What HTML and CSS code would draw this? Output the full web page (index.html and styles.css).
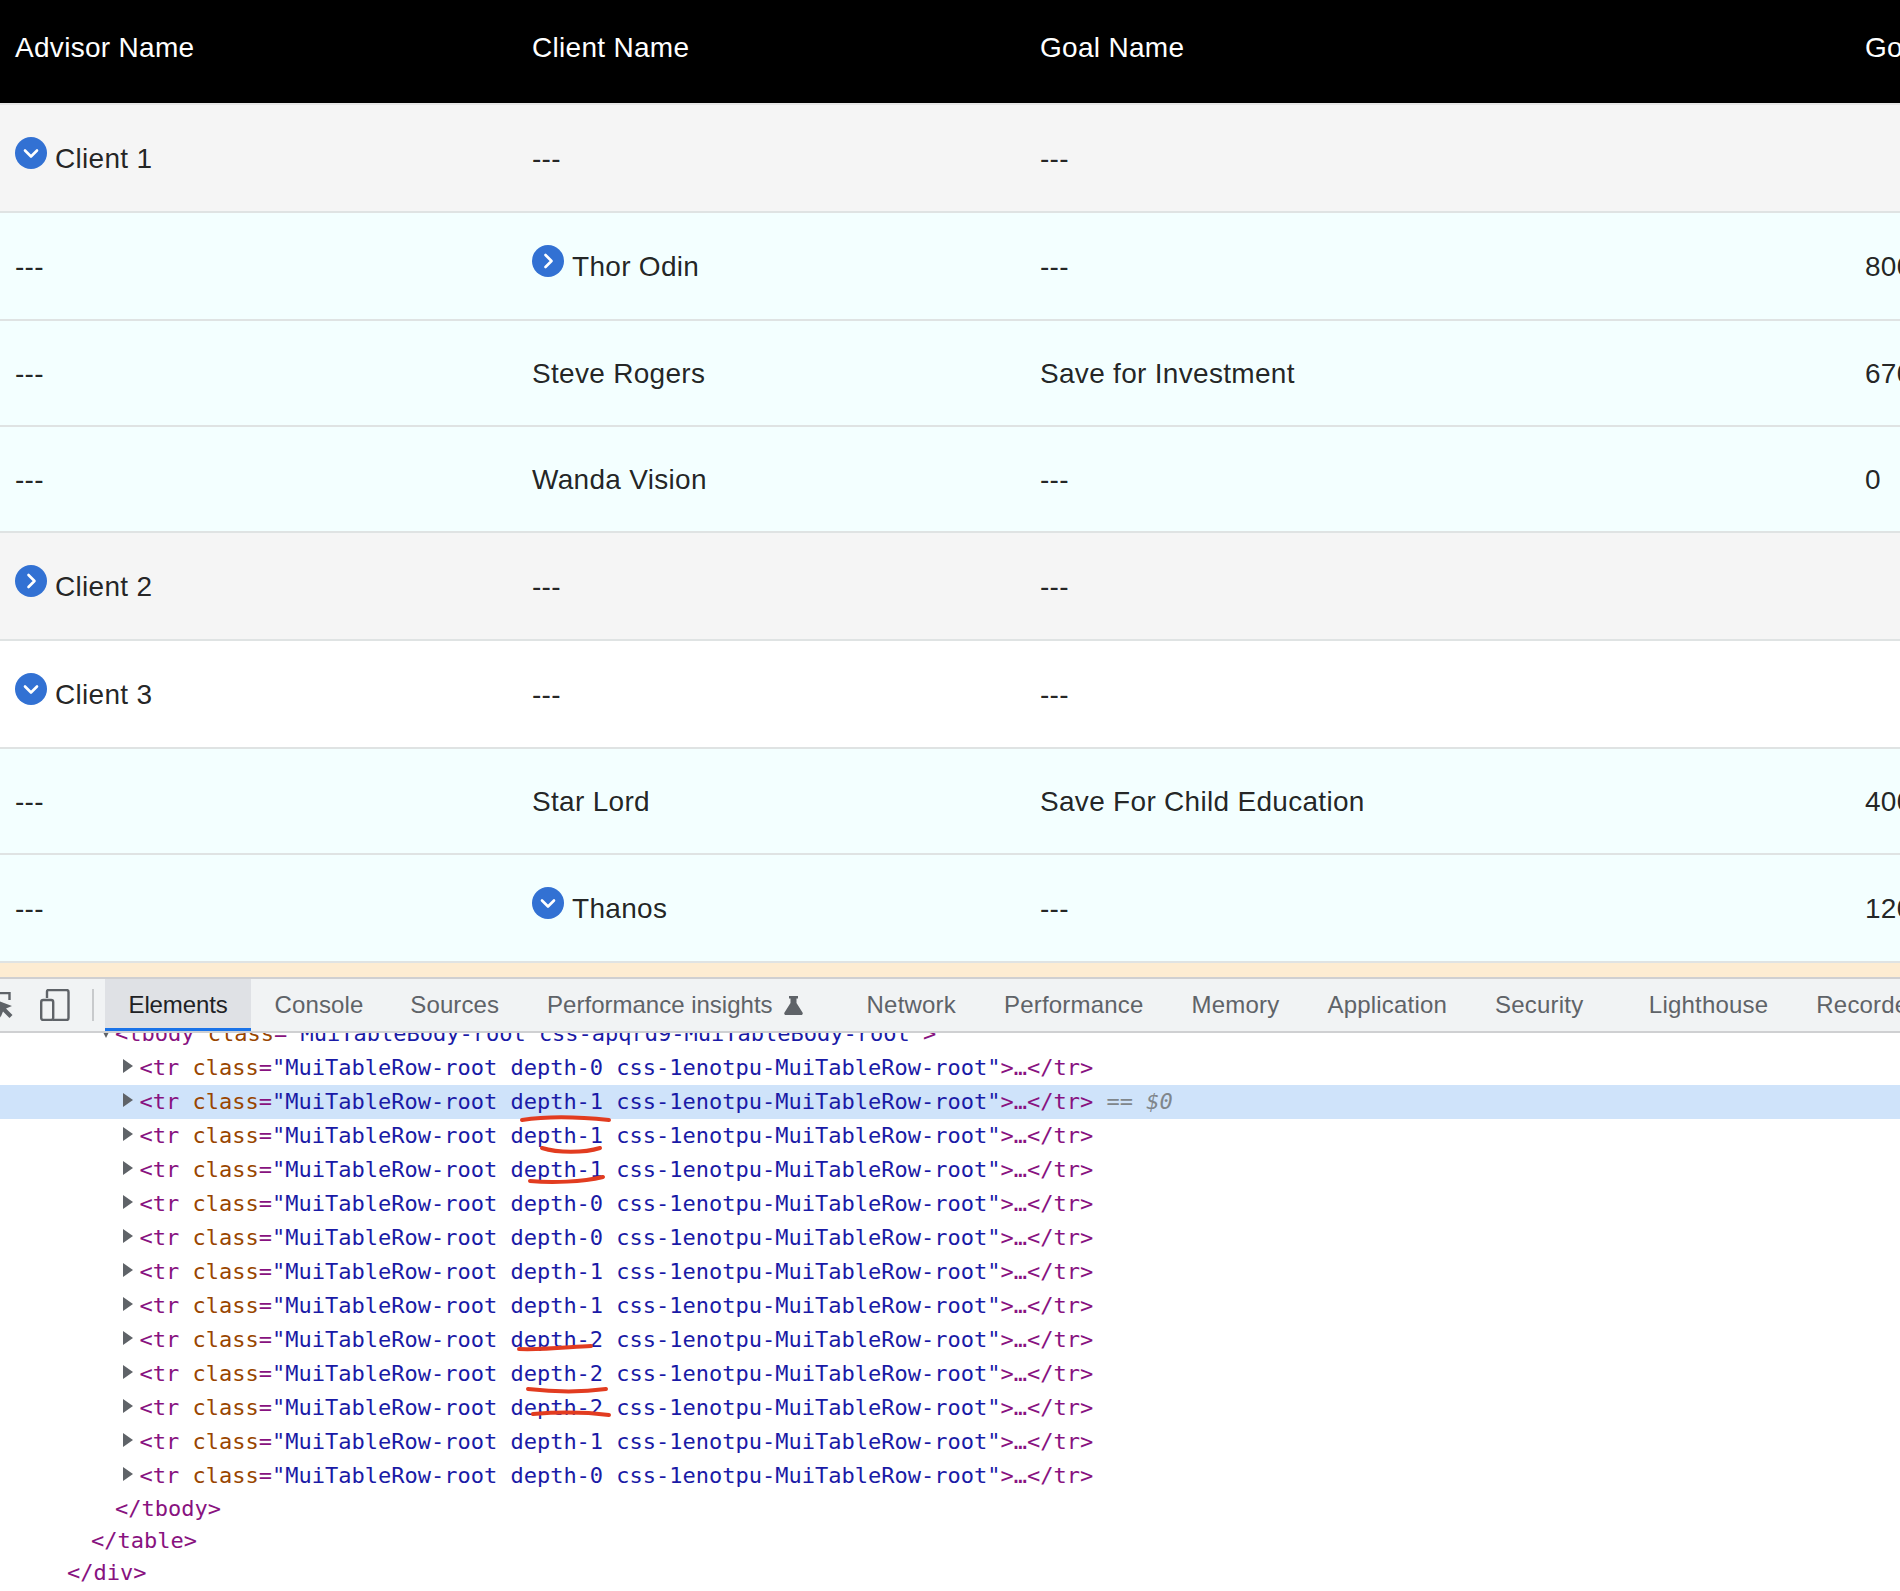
FILE: index.html
```html
<!DOCTYPE html>
<html lang="en">
<head>
<meta charset="utf-8">
<title>Advisor table</title>
<link rel="stylesheet" href="styles.css">
</head>
<body>
<div class="page">
  <section class="table-view">
    <table class="data-table">
      <colgroup><col class="col-a"><col class="col-b"><col class="col-c"><col class="col-d"></colgroup>
      <thead>
        <tr><th>Advisor Name</th><th>Client Name</th><th>Goal Name</th><th>Goal Amount</th></tr>
      </thead>
      <tbody>
        <tr class="row-tall bg-gray">
          <td><svg class="toggle" viewBox="0 0 32 32"><circle cx="16" cy="16" r="16"/><path d="M10 13.500l6 6 6-6"/></svg>Client 1</td><td>---</td><td>---</td><td></td>
        </tr>
        <tr class="row-tall bg-azure">
          <td>---</td><td><svg class="toggle" viewBox="0 0 32 32"><circle cx="16" cy="16" r="16"/><path d="M13.500 10l6 6-6 6"/></svg>Thor Odin</td><td>---</td><td>8000</td>
        </tr>
        <tr class="row bg-azure"><td>---</td><td>Steve Rogers</td><td>Save for Investment</td><td>6700</td></tr>
        <tr class="row bg-azure"><td>---</td><td>Wanda Vision</td><td>---</td><td>0</td></tr>
        <tr class="row-tall bg-gray">
          <td><svg class="toggle" viewBox="0 0 32 32"><circle cx="16" cy="16" r="16"/><path d="M13.500 10l6 6-6 6"/></svg>Client 2</td><td>---</td><td>---</td><td></td>
        </tr>
        <tr class="row-tall bg-white">
          <td><svg class="toggle" viewBox="0 0 32 32"><circle cx="16" cy="16" r="16"/><path d="M10 13.500l6 6 6-6"/></svg>Client 3</td><td>---</td><td>---</td><td></td>
        </tr>
        <tr class="row bg-azure"><td>---</td><td>Star Lord</td><td>Save For Child Education</td><td>4000</td></tr>
        <tr class="row-tall bg-azure">
          <td>---</td><td><svg class="toggle" viewBox="0 0 32 32"><circle cx="16" cy="16" r="16"/><path d="M10 13.500l6 6 6-6"/></svg>Thanos</td><td>---</td><td>1200</td>
        </tr>
      </tbody>
    </table>
  </section>

  <div class="info-bar"></div>

  <section class="devtools">
    <nav class="dt-toolbar">
      <div class="dt-tools">
        <svg class="tool-cursor" viewBox="0 0 14 28"><path class="tool-line" d="M0 1h9.500v7"/><path class="tool-fill" d="M-4 8l16 6-6 2.500 6.500 6.500-3 3-6.500-6.500-2.500 6z"/></svg>
        <svg class="tool-device" viewBox="0 0 30 32"><path class="tool-line" d="M7 9V2.500a1.500 1.500 0 0 1 1.500-1.500h18a2 2 0 0 1 2 2v26a2 2 0 0 1-2 2H13"/><rect class="tool-line" x="1.200" y="11" width="12" height="20" rx="2"/></svg>
        <span class="tool-sep"></span>
      </div>
      <span class="tab tab-active">Elements</span>
      <span class="tab">Console</span>
      <span class="tab tab-sources">Sources</span>
      <span class="tab tab-flask">Performance insights<svg class="flask" viewBox="0 0 19 19"><path d="M5 0h9v2.500h-1.500v4.500l6 9.500c.7 1.200 0 2.500-1.300 2.500H1.800C.5 19-.2 17.700.5 16.500l6-9.500V2.500H5z"/></svg></span>
      <span class="tab tab-wide">Network</span>
      <span class="tab tab-wide">Performance</span>
      <span class="tab tab-wide">Memory</span>
      <span class="tab tab-wide">Application</span>
      <span class="tab tab-wide tab-spaced">Security</span>
      <span class="tab tab-wide">Lighthouse</span>
      <span class="tab tab-wide">Recorder</span>
    </nav>

    <div class="dom-tree">
      <div class="line line-open"><span class="arrow-open"></span><span class="tag">&lt;tbody</span> <span class="attr">class</span><span class="tag">=</span><span class="val">"MuiTableBody-root css-apqrd9-MuiTableBody-root"</span><span class="tag">&gt;</span></div>
      <div class="line line-row"><span class="arrow"></span><span class="tag">&lt;tr</span> <span class="attr">class</span><span class="tag">=</span><span class="val">"MuiTableRow-root depth-0 css-1enotpu-MuiTableRow-root"</span><span class="tag">&gt;…&lt;/tr&gt;</span></div>
      <div class="line line-row line-selected"><span class="arrow"></span><span class="tag">&lt;tr</span> <span class="attr">class</span><span class="tag">=</span><span class="val">"MuiTableRow-root depth-1 css-1enotpu-MuiTableRow-root"</span><span class="tag">&gt;…&lt;/tr&gt;</span><span class="ref"> == <i>$0</i></span></div>
      <div class="line line-row"><span class="arrow"></span><span class="tag">&lt;tr</span> <span class="attr">class</span><span class="tag">=</span><span class="val">"MuiTableRow-root depth-1 css-1enotpu-MuiTableRow-root"</span><span class="tag">&gt;…&lt;/tr&gt;</span></div>
      <div class="line line-row"><span class="arrow"></span><span class="tag">&lt;tr</span> <span class="attr">class</span><span class="tag">=</span><span class="val">"MuiTableRow-root depth-1 css-1enotpu-MuiTableRow-root"</span><span class="tag">&gt;…&lt;/tr&gt;</span></div>
      <div class="line line-row"><span class="arrow"></span><span class="tag">&lt;tr</span> <span class="attr">class</span><span class="tag">=</span><span class="val">"MuiTableRow-root depth-0 css-1enotpu-MuiTableRow-root"</span><span class="tag">&gt;…&lt;/tr&gt;</span></div>
      <div class="line line-row"><span class="arrow"></span><span class="tag">&lt;tr</span> <span class="attr">class</span><span class="tag">=</span><span class="val">"MuiTableRow-root depth-0 css-1enotpu-MuiTableRow-root"</span><span class="tag">&gt;…&lt;/tr&gt;</span></div>
      <div class="line line-row"><span class="arrow"></span><span class="tag">&lt;tr</span> <span class="attr">class</span><span class="tag">=</span><span class="val">"MuiTableRow-root depth-1 css-1enotpu-MuiTableRow-root"</span><span class="tag">&gt;…&lt;/tr&gt;</span></div>
      <div class="line line-row"><span class="arrow"></span><span class="tag">&lt;tr</span> <span class="attr">class</span><span class="tag">=</span><span class="val">"MuiTableRow-root depth-1 css-1enotpu-MuiTableRow-root"</span><span class="tag">&gt;…&lt;/tr&gt;</span></div>
      <div class="line line-row"><span class="arrow"></span><span class="tag">&lt;tr</span> <span class="attr">class</span><span class="tag">=</span><span class="val">"MuiTableRow-root depth-2 css-1enotpu-MuiTableRow-root"</span><span class="tag">&gt;…&lt;/tr&gt;</span></div>
      <div class="line line-row"><span class="arrow"></span><span class="tag">&lt;tr</span> <span class="attr">class</span><span class="tag">=</span><span class="val">"MuiTableRow-root depth-2 css-1enotpu-MuiTableRow-root"</span><span class="tag">&gt;…&lt;/tr&gt;</span></div>
      <div class="line line-row"><span class="arrow"></span><span class="tag">&lt;tr</span> <span class="attr">class</span><span class="tag">=</span><span class="val">"MuiTableRow-root depth-2 css-1enotpu-MuiTableRow-root"</span><span class="tag">&gt;…&lt;/tr&gt;</span></div>
      <div class="line line-row"><span class="arrow"></span><span class="tag">&lt;tr</span> <span class="attr">class</span><span class="tag">=</span><span class="val">"MuiTableRow-root depth-1 css-1enotpu-MuiTableRow-root"</span><span class="tag">&gt;…&lt;/tr&gt;</span></div>
      <div class="line line-row"><span class="arrow"></span><span class="tag">&lt;tr</span> <span class="attr">class</span><span class="tag">=</span><span class="val">"MuiTableRow-root depth-0 css-1enotpu-MuiTableRow-root"</span><span class="tag">&gt;…&lt;/tr&gt;</span></div>
      <div class="line line-tbody"><span class="tag">&lt;/tbody&gt;</span></div>
      <div class="line line-table"><span class="tag">&lt;/table&gt;</span></div>
      <div class="line line-div"><span class="tag">&lt;/div&gt;</span></div>
    </div>
  </section>

  <svg class="annotations" viewBox="0 0 1900 1591">
    <path d="M522 1120c26-4 58-3 87 0"/>
    <path d="M542 1148c16 5 42 5 58 0"/>
    <path d="M530 1181c22 2 52 1 73-4"/>
    <path d="M519 1349c24 1 50-2 72-3"/>
    <path d="M528 1389c26 3 56 3 78 0"/>
    <path d="M533 1414c24-2 52-2 76 1"/>
  </svg>
</div>
</body>
</html>
```
FILE: styles.css
```css
* { box-sizing: border-box; }

html, body {
  margin: 0;
  padding: 0;
  height: 100%;
  overflow: hidden;
  background: #fff;
}

.page {
  position: relative;
  display: flex;
  flex-direction: column;
  width: 1900px;
  height: 1591px;
  overflow: hidden;
}

/* Data table */
.table-view {
  flex: 0 0 963px;
  overflow: hidden;
}

.data-table {
  table-layout: fixed;
  width: 2250px;
  border-collapse: separate;
  border-spacing: 0;
  font-family: "Liberation Sans", Arial, sans-serif;
  font-size: 28px;
  letter-spacing: 0.3px;
  color: rgba(0, 0, 0, 0.87);
}

.col-a { width: 517px; }
.col-b { width: 508px; }
.col-c { width: 825px; }
.col-d { width: 400px; }

.data-table th {
  height: 105px;
  padding: 0 15px 7px;
  background: #000;
  border-bottom: 2px solid #e6e6e6;
  color: #fff;
  font-weight: 400;
  text-align: left;
}

.data-table td {
  padding: 0 15px;
  border-bottom: 2px solid #dfe3e3;
  white-space: nowrap;
}

.row td {
  height: 106px;
  padding-top: 1px;
}

.row-tall td {
  height: 108px;
  padding-top: 2px;
}

.bg-gray td { background: #f5f5f5; }
.bg-azure td { background: #f3ffff; }
.bg-white td { background: #fff; }

.toggle {
  display: inline-block;
  width: 32px;
  height: 32px;
  margin-top: -8px;
  margin-right: 8px;
  vertical-align: -1px;
}

.toggle circle { fill: #3271d3; }

.toggle path {
  fill: none;
  stroke: #fff;
  stroke-width: 2.6;
  stroke-linecap: round;
  stroke-linejoin: round;
}

/* Notice strip */
.info-bar {
  flex: 0 0 14px;
  background: #fdecd2;
}

/* DevTools */
.devtools {
  flex: 1;
  display: flex;
  flex-direction: column;
  min-height: 0;
}

.dt-toolbar {
  flex: 0 0 56px;
  display: flex;
  align-items: stretch;
  overflow: hidden;
  background: #f1f3f4;
  border-top: 2px solid #cfcfd1;
  border-bottom: 2px solid #cfd0d2;
  font-family: "Liberation Sans", Arial, sans-serif;
  font-size: 24px;
  letter-spacing: 0.1px;
  white-space: nowrap;
}

.dt-tools {
  flex: 0 0 105px;
  display: flex;
  align-items: center;
}

.tool-cursor {
  flex: none;
  width: 14px;
  height: 28px;
  margin-top: 2px;
}

.tool-device {
  flex: none;
  width: 30px;
  height: 32px;
  margin-left: 26px;
}

.tool-line {
  fill: none;
  stroke: #5f6368;
  stroke-width: 2.4;
}

.tool-fill { fill: #5f6368; }

.tool-sep {
  flex: none;
  width: 2px;
  height: 32px;
  margin-left: 22px;
  background: #c8cacc;
}

.tab {
  display: flex;
  align-items: center;
  flex: none;
  padding: 0 23.5px;
  color: #5f6368;
}

.tab-active {
  background: #dfe1e5;
  color: #202124;
  box-shadow: inset 0 -3px 0 #1a73e8;
  letter-spacing: -0.12px;
}

.tab-sources { padding-right: 24.5px; }

.tab-flask {
  padding-right: 58.5px;
  letter-spacing: 0;
}

.tab-wide {
  padding: 0 24px;
  letter-spacing: 0.2px;
}

.tab-spaced { padding-right: 41.5px; }

.flask {
  flex: none;
  width: 19px;
  height: 19px;
  margin-left: 11.5px;
  margin-right: -19px;
  fill: #5f6368;
}

.dom-tree {
  flex: 1;
  min-height: 0;
  overflow: hidden;
  font-family: "DejaVu Sans Mono", "Liberation Mono", monospace;
  font-size: 22px;
}

.line {
  height: 34px;
  line-height: 34px;
  white-space: pre;
}

.line-open {
  margin-top: -16px;
  padding-left: 101px;
}

.line-row { padding-left: 123px; }
.line-selected { background: #cfe3fa; }
.line-tbody { padding-left: 115px; height: 32px; line-height: 32px; }
.line-table { padding-left: 91px; height: 32px; line-height: 32px; }
.line-div { padding-left: 67px; height: 32px; line-height: 32px; }

.arrow {
  display: inline-block;
  width: 0;
  height: 0;
  margin-right: 6.500px;
  vertical-align: 2px;
  border-style: solid;
  border-width: 7px 0 7px 10px;
  border-color: transparent transparent transparent #5f6368;
}

.arrow-open {
  display: inline-block;
  width: 0;
  height: 0;
  margin-right: 4px;
  vertical-align: 3px;
  border-style: solid;
  border-width: 10px 5px 0;
  border-color: #5f6368 transparent transparent;
}

.tag { color: #881280; }
.attr { color: #994500; }
.val { color: #1a1aa6; }
.ref { color: #80868b; }

.annotations {
  position: absolute;
  top: 0;
  left: 0;
  width: 1900px;
  height: 1591px;
  pointer-events: none;
  fill: none;
  stroke: #e23c20;
  stroke-width: 4;
  stroke-linecap: round;
}
```
